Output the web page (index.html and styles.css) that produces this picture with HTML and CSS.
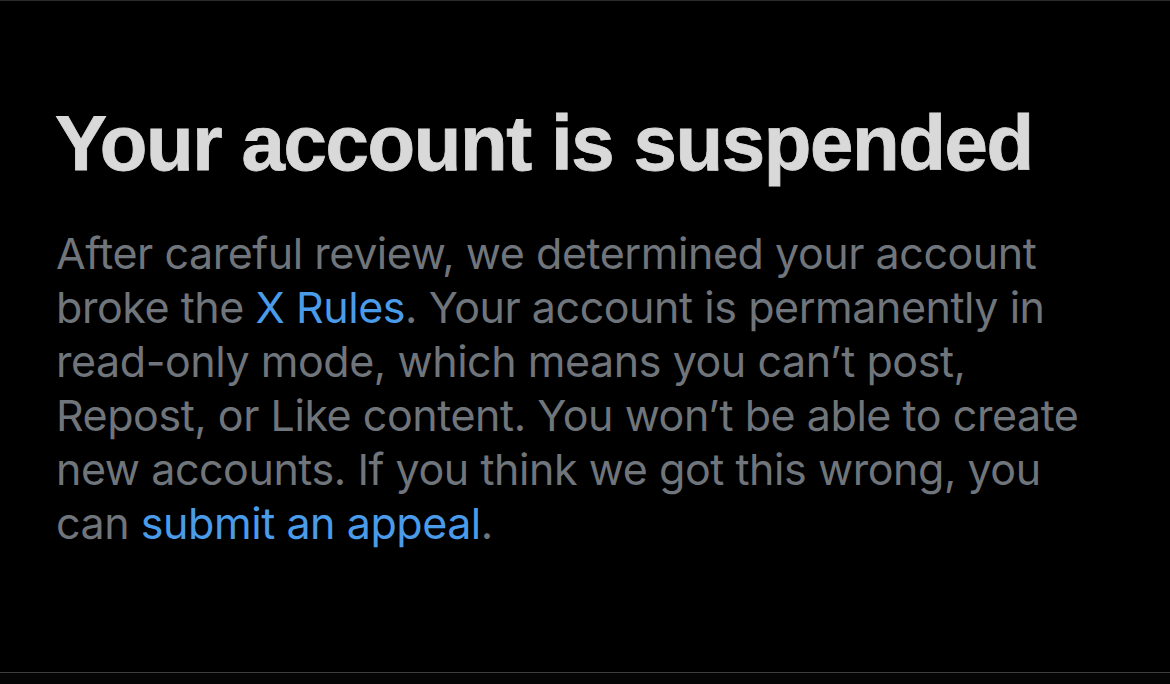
FILE: index.html
```html
<!DOCTYPE html>
<html lang="en">
<head>
<meta charset="utf-8">
<title>Your account is suspended</title>
<link rel="stylesheet" href="styles.css">
</head>
<body>
<main class="screen">
  <section class="notice">
    <h1 class="title">Your account is suspended</h1>
    <p class="body">After careful review, we determined your account<br>broke the <a class="link" href="#">X Rules</a>. Your account is permanently in<br>read-only mode, which means you can’t post,<br>Repost, or Like content. You won’t be able to create<br>new accounts. If you think we got this wrong, you<br>can <a class="link" href="#">submit an appeal</a>.</p>
  </section>
  <div class="footer"></div>
</main>
</body>
</html>
```

FILE: styles.css
```css
html, body {
  margin: 0;
  padding: 0;
  background: #000;
}
.screen {
  width: 1170px;
  height: 684px;
  box-sizing: border-box;
  border-top: 1px solid #2b2b2f;
  display: flex;
  flex-direction: column;
  background: #000;
}
.notice {
  flex: 1;
  padding: 0 0 0 56px;
}
.title {
  margin: 97px 0 0 -1px;
  font-family: "Liberation Sans", Arial, sans-serif;
  font-weight: 700;
  font-size: 78px;
  line-height: 90px;
  color: #d9d9d9;
  letter-spacing: -1.4px;
  -webkit-text-stroke: 0.8px #d9d9d9;
}
.body {
  margin: 38px 0 0 0;
  font-family: Inter, "Liberation Sans", sans-serif;
  font-size: 43px;
  line-height: 54px;
  letter-spacing: -0.45px;
  color: #6f757b;
}
.link {
  color: #4a9be9;
  text-decoration: none;
}
.footer {
  height: 11px;
  border-top: 1px solid #3e3e3e;
  background: #050505;
}
```
